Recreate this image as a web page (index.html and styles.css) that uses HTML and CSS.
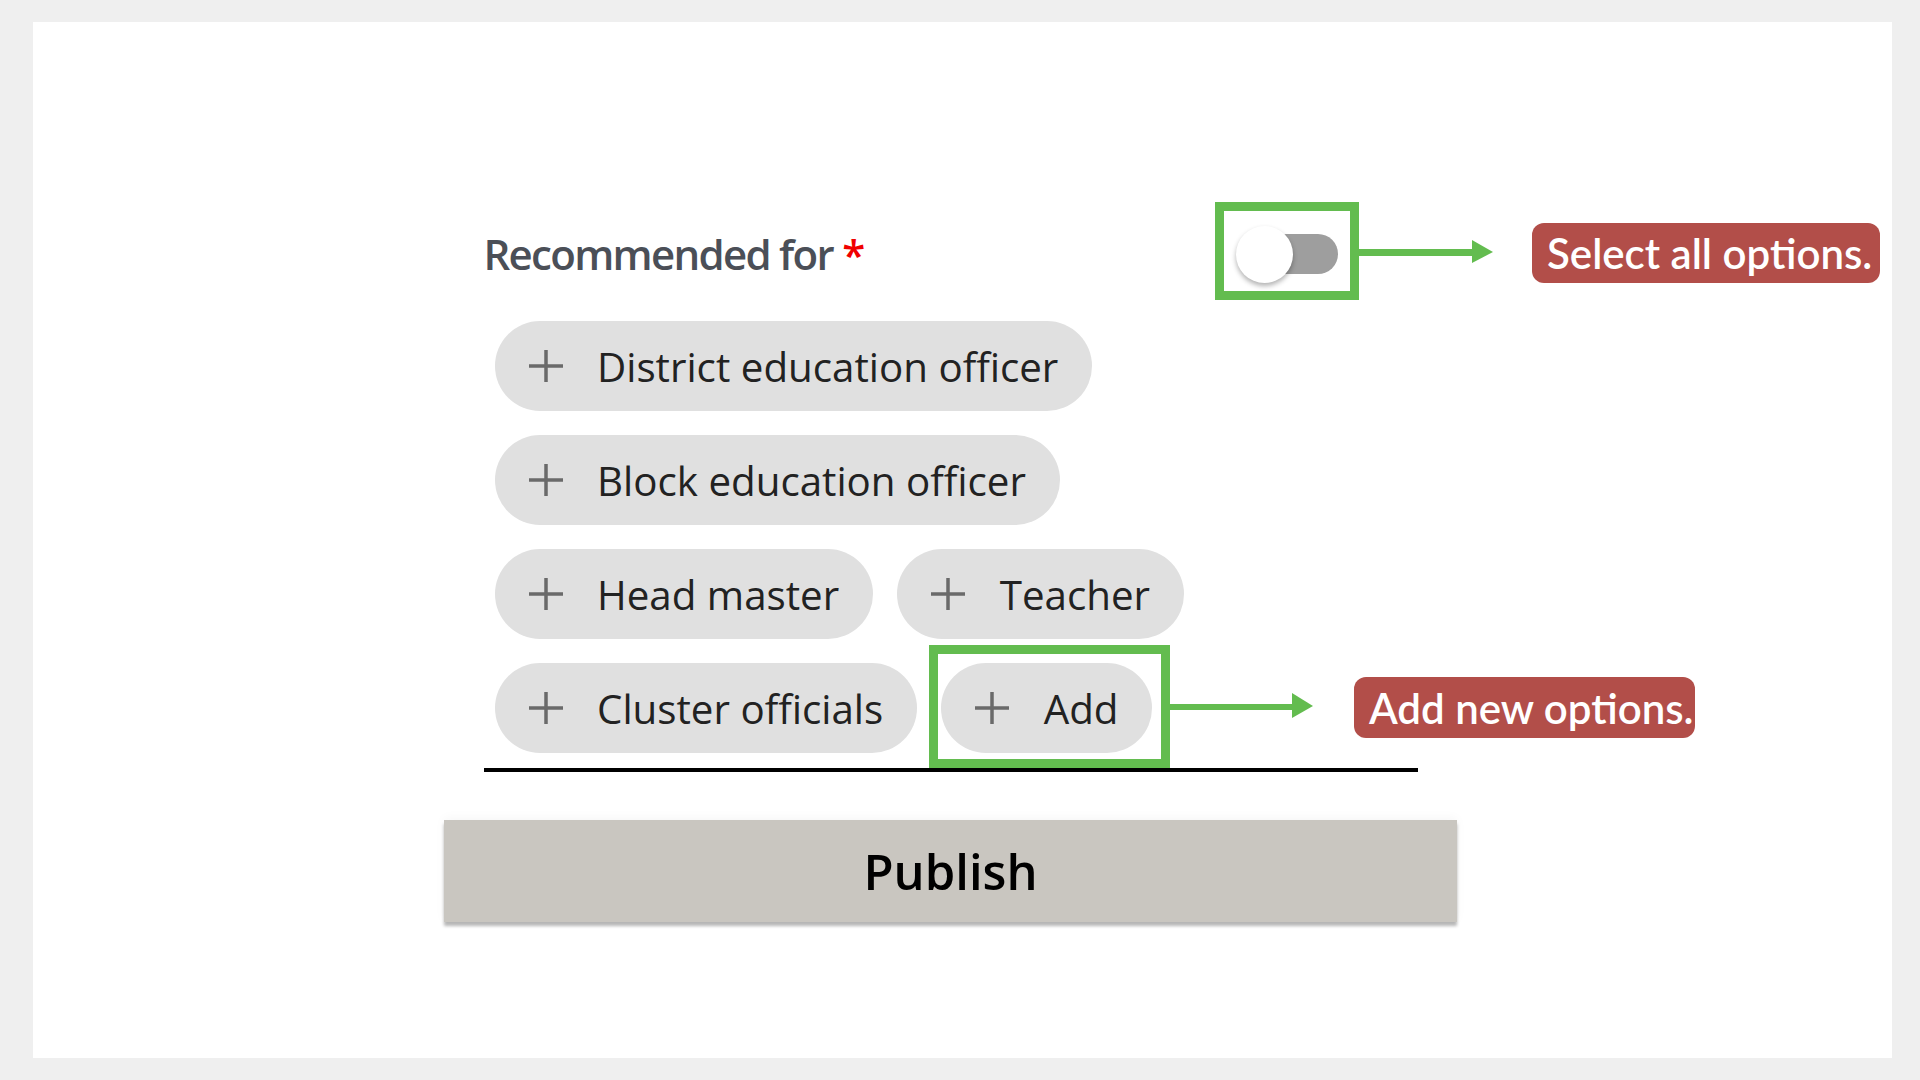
FILE: index.html
```html
<!DOCTYPE html>
<html lang="en">
<head>
<meta charset="utf-8">
<title>Recommended for</title>
<link rel="stylesheet" href="styles.css">
</head>
<body>
<div class="panel">
  <div class="form">
    <div class="field">
      <div class="title-row">
        <div class="title">Recommended for <span class="req">*</span></div>
        <div class="toggle">
          <div class="track"></div>
          <div class="knob"></div>
        </div>
      </div>
      <div class="chips">
        <div class="chip"><svg class="plus" viewBox="0 0 34 32"><path d="M17 0V32M0 16H34"/></svg><span>District education officer</span></div>
        <div class="chip"><svg class="plus" viewBox="0 0 34 32"><path d="M17 0V32M0 16H34"/></svg><span>Block education officer</span></div>
        <div class="chip"><svg class="plus" viewBox="0 0 34 32"><path d="M17 0V32M0 16H34"/></svg><span>Head master</span></div>
        <div class="chip"><svg class="plus" viewBox="0 0 34 32"><path d="M17 0V32M0 16H34"/></svg><span>Teacher</span></div>
        <div class="chip"><svg class="plus" viewBox="0 0 34 32"><path d="M17 0V32M0 16H34"/></svg><span>Cluster officials</span></div>
        <div class="chip"><svg class="plus" viewBox="0 0 34 32"><path d="M17 0V32M0 16H34"/></svg><span>Add</span></div>
      </div>
    </div>
    <button class="publish">Publish</button>
  </div>

  <div class="hl hl-toggle"></div>
  <svg class="arrow arrow-1" viewBox="0 0 134 24"><rect x="0" y="9" width="115" height="7"/><polygon points="113,0 134,12 113,23"/></svg>
  <div class="badge badge-1">Select all options.</div>

  <div class="hl hl-add"></div>
  <svg class="arrow arrow-2" viewBox="0 0 143 25"><rect x="0" y="11" width="124" height="6"/><polygon points="122,0 143,13 122,25"/></svg>
  <div class="badge badge-2">Add new options.</div>
</div>
</body>
</html>
```

FILE: styles.css
```css
html, body {
  margin: 0;
  padding: 0;
}
body {
  background: #efefef;
  width: 1920px;
  height: 1080px;
  overflow: hidden;
  font-family: "Open Sans", "Noto Sans", sans-serif;
}
.panel {
  position: relative;
  margin: 22px 0 0 33px;
  width: 1859px;
  height: 1036px;
  background: #ffffff;
}
.form {
  display: flex;
  flex-direction: column;
  align-items: center;
  width: 1013px;
  margin-left: 411px;
  padding-top: 202px;
}
.field {
  width: 934px;
  border-bottom: 4px solid #000;
  padding-bottom: 15px;
}
.title-row {
  display: flex;
  align-items: center;
  height: 60px;
}
.title {
  font-size: 42px;
  font-weight: 600;
  line-height: 60px;
  color: #4b4f57;
  letter-spacing: -1.7px;
}
.req {
  color: #f00000;
}
.toggle {
  position: relative;
  margin-left: auto;
  margin-right: 80px;
  width: 102px;
  height: 57px;
}
.track {
  position: absolute;
  right: 0;
  top: 8px;
  width: 88px;
  height: 40px;
  border-radius: 20px;
  background: #9e9e9e;
}
.knob {
  position: absolute;
  left: 0;
  top: 0;
  width: 57px;
  height: 57px;
  border-radius: 50%;
  background: #ffffff;
  box-shadow: 0 3px 5px rgba(0, 0, 0, 0.3);
}
.chips {
  display: flex;
  flex-wrap: wrap;
  gap: 24px 24px;
  margin-top: 37px;
  padding-left: 11px;
  padding-right: 40px;
}
.chip {
  display: flex;
  align-items: center;
  height: 90px;
  padding: 0 34px 0 34px;
  border-radius: 45px;
  background: #e0e0e0;
  font-size: 40.3px;
  color: #222222;
  white-space: nowrap;
}
.plus {
  width: 34px;
  height: 32px;
  margin-right: 34.5px;
  fill: none;
  stroke: #6a6a6a;
  stroke-width: 3.5;
}
.publish {
  margin-top: 48px;
  width: 1013px;
  height: 102px;
  border: none;
  background: #c9c6c0;
  font-family: "Open Sans", "Noto Sans", sans-serif;
  font-size: 49px;
  font-weight: 600;
  color: #000;
  box-shadow: 0 4px 3px rgba(0, 0, 0, 0.28), 0 -2px 10px rgba(0, 0, 0, 0.04);
}
.hl {
  position: absolute;
  box-sizing: border-box;
  border: 9px solid #63bc4f;
}
.hl-toggle {
  left: 1182px;
  top: 180px;
  width: 144px;
  height: 98px;
}
.hl-add {
  left: 896px;
  top: 623px;
  width: 241px;
  height: 123px;
}
.arrow {
  position: absolute;
  fill: #63bc4f;
}
.arrow-1 {
  left: 1326px;
  top: 218px;
  width: 134px;
  height: 24px;
}
.arrow-2 {
  left: 1137px;
  top: 671px;
  width: 143px;
  height: 25px;
}
.badge {
  position: absolute;
  box-sizing: border-box;
  display: flex;
  align-items: center;
  background: #b24e49;
  border-radius: 12px;
  color: #ffffff;
  font-family: "Lato", sans-serif;
  font-weight: 600;
  font-size: 42px;
  white-space: nowrap;
  padding-left: 15px;
}
.badge-1 {
  left: 1499px;
  top: 201px;
  width: 348px;
  height: 60px;
}
.badge-2 {
  left: 1321px;
  top: 655px;
  width: 341px;
  height: 61px;
}
```
